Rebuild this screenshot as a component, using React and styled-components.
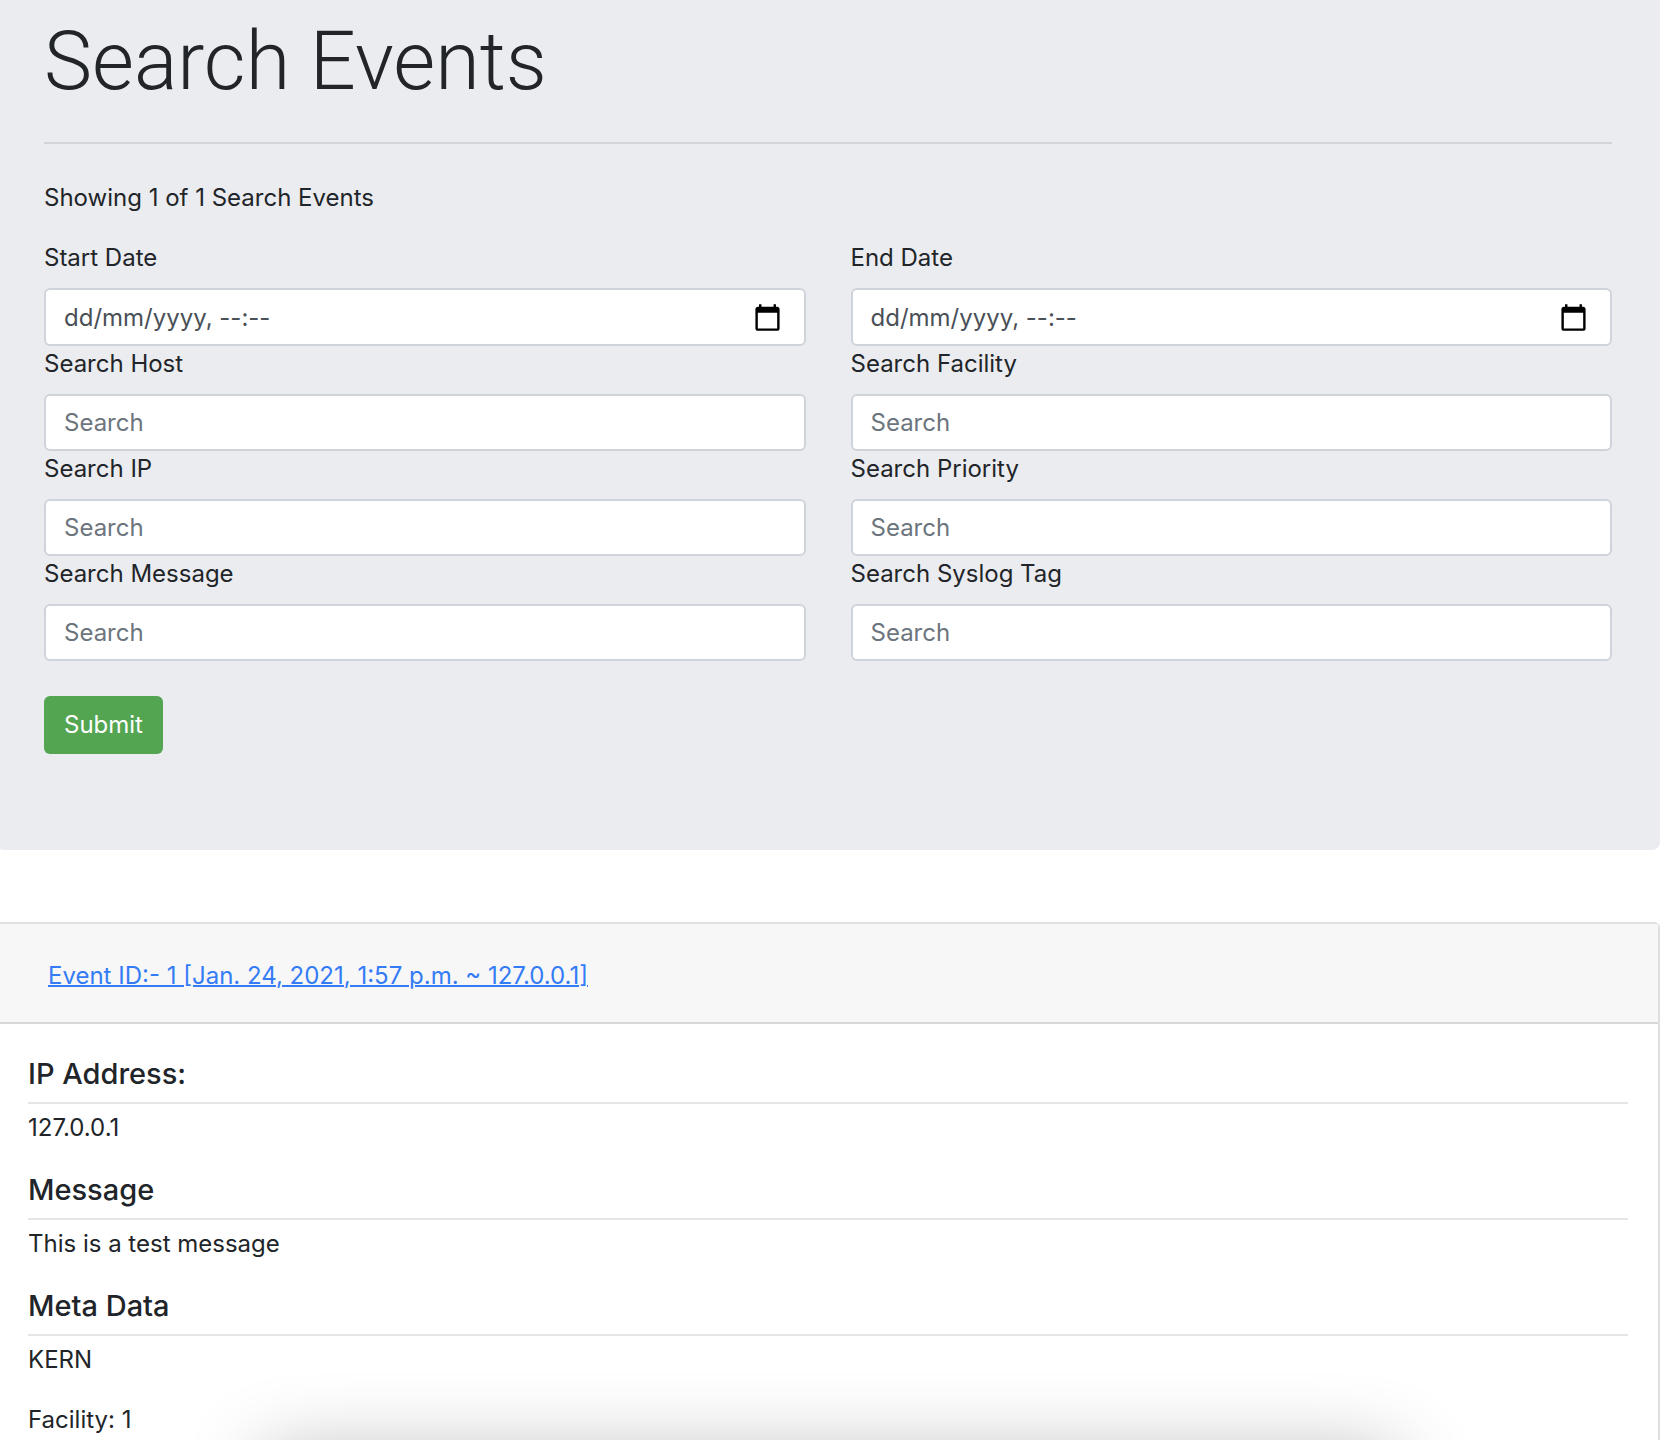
import React from "react";
import styled, { createGlobalStyle } from "styled-components";

const GlobalStyle = createGlobalStyle`
  *, *::before, *::after { box-sizing: border-box; }
  body {
    margin: 0;
    background: #fff;
    color: #212529;
    font-family: Inter, "Liberation Sans", sans-serif;
    font-size: 24px;
    line-height: 36px;
  }
`;

const Page = styled.div`
  display: flex;
  flex-direction: column;
  min-height: 100vh;
  margin-left: -4px;
  padding-right: 12px;
  overflow: hidden;
`;

const Jumbotron = styled.section`
  padding: 12px 48px 96px;
  margin-bottom: 72px;
  border-radius: 0 0 8px 8px;
  background: #ebecf0;
`;

const Title = styled.h1`
  margin: 0 0 30px;
  font-family: Roboto, Inter, sans-serif;
  font-size: 81px;
  font-weight: 350;
  line-height: 100px;
`;

const Rule = styled.hr`
  height: 2px;
  margin: 0 0 ${(p) => p.$gap}px;
  border: 0;
  background: rgba(0, 0, 0, 0.1);
`;

const Text = styled.p`
  margin: 0 0 24px;
`;

const FieldGrid = styled.div`
  display: grid;
  grid-template-columns: 1fr 1fr;
  column-gap: 45px;
`;

const Label = styled.label`
  display: block;
  margin-bottom: 12px;
`;

const InputWrap = styled.div`
  position: relative;
`;

const Input = styled.input`
  display: block;
  width: 100%;
  height: ${(p) => (p.$date ? 58 : 57)}px;
  padding: 0 18px;
  border: 2px solid #ced4da;
  border-radius: 6px;
  background: #fff;
  color: #495057;
  font: inherit;

  &::placeholder {
    color: ${(p) => (p.$date ? "#495057" : "#6c757d")};
    opacity: 1;
  }
`;

const PickerButton = styled.button`
  position: absolute;
  top: 0;
  right: 24px;
  display: flex;
  align-items: center;
  height: 100%;
  padding: 0;
  border: 0;
  background: none;
  color: #000;
`;

const SubmitButton = styled.button`
  display: block;
  height: 58px;
  margin-top: 35px;
  padding: 0 20px;
  border: 0;
  border-radius: 6px;
  background: #53a551;
  color: #fff;
  font: inherit;
`;

const Card = styled.article`
  flex: 1;
  border: 2px solid #dfdfdf;
  border-bottom: 0;
  border-radius: 6px 6px 0 0;
`;

const CardHeader = styled.header`
  padding: 34px 50px 28px;
  border-bottom: 2px solid #d8d8d8;
  background: #f7f7f7;
`;

const EventLink = styled.a`
  display: block;
  width: fit-content;
  color: #347cf6;
  text-decoration: underline;
  text-decoration-thickness: 2px;
`;

const CardBody = styled.div`
  padding: 32px 30px 0;

  & > :last-child {
    margin-bottom: 0;
  }
`;

const Heading = styled.h5`
  margin: 0 0 10px;
  font-size: 29px;
  font-weight: 500;
  line-height: 36px;

  p + & {
    margin-top: 26px;
  }
`;

const WindowShadow = styled.div`
  position: fixed;
  top: calc(100% + 16px);
  left: 264px;
  right: 276px;
  height: 200px;
  box-shadow: 0 0 80px rgba(0, 0, 0, 0.3);
  pointer-events: none;
`;

const fields = [
  { id: "start", label: "Start Date", date: true },
  { id: "end", label: "End Date", date: true },
  { id: "host", label: "Search Host" },
  { id: "facility", label: "Search Facility" },
  { id: "ip", label: "Search IP" },
  { id: "priority", label: "Search Priority" },
  { id: "message", label: "Search Message" },
  { id: "syslog", label: "Search Syslog Tag" },
];

function CalendarIcon() {
  return (
    <svg width="29" height="29" viewBox="0 0 24 24" fill="currentColor" aria-hidden="true">
      <path d="M20 3h-1V1h-2v2H7V1H5v2H4c-1.1 0-2 .9-2 2v16c0 1.1.9 2 2 2h16c1.1 0 2-.9 2-2V5c0-1.1-.9-2-2-2zm0 18H4V8h16v13z" />
    </svg>
  );
}

function Field({ id, label, date }) {
  return (
    <div>
      <Label htmlFor={id}>{label}</Label>
      <InputWrap>
        <Input
          id={id}
          name={id}
          type="text"
          $date={date}
          placeholder={date ? "dd/mm/yyyy, --:--" : "Search"}
        />
        {date && (
          <PickerButton type="button">
            <CalendarIcon />
          </PickerButton>
        )}
      </InputWrap>
    </div>
  );
}

export default function App() {
  return (
    <>
      <GlobalStyle />
      <Page>
        <Jumbotron>
          <Title>Search Events</Title>
          <Rule $gap={36} />
          <Text>Showing 1 of 1 Search Events</Text>
          <form onSubmit={(e) => e.preventDefault()}>
            <FieldGrid>
              {fields.map((f) => (
                <Field key={f.id} {...f} />
              ))}
            </FieldGrid>
            <SubmitButton type="submit">Submit</SubmitButton>
          </form>
        </Jumbotron>
        <Card>
          <CardHeader>
            <EventLink href="#event-1">
              Event ID:- 1 [Jan. 24, 2021, 1:57 p.m. ~ 127.0.0.1]
            </EventLink>
          </CardHeader>
          <CardBody id="event-1">
            <Heading>IP Address:</Heading>
            <Rule $gap={6} />
            <Text>127.0.0.1</Text>
            <Heading>Message</Heading>
            <Rule $gap={6} />
            <Text>This is a test message</Text>
            <Heading>Meta Data</Heading>
            <Rule $gap={6} />
            <Text>KERN</Text>
            <Text>Facility: 1</Text>
          </CardBody>
        </Card>
      </Page>
      <WindowShadow />
    </>
  );
}
